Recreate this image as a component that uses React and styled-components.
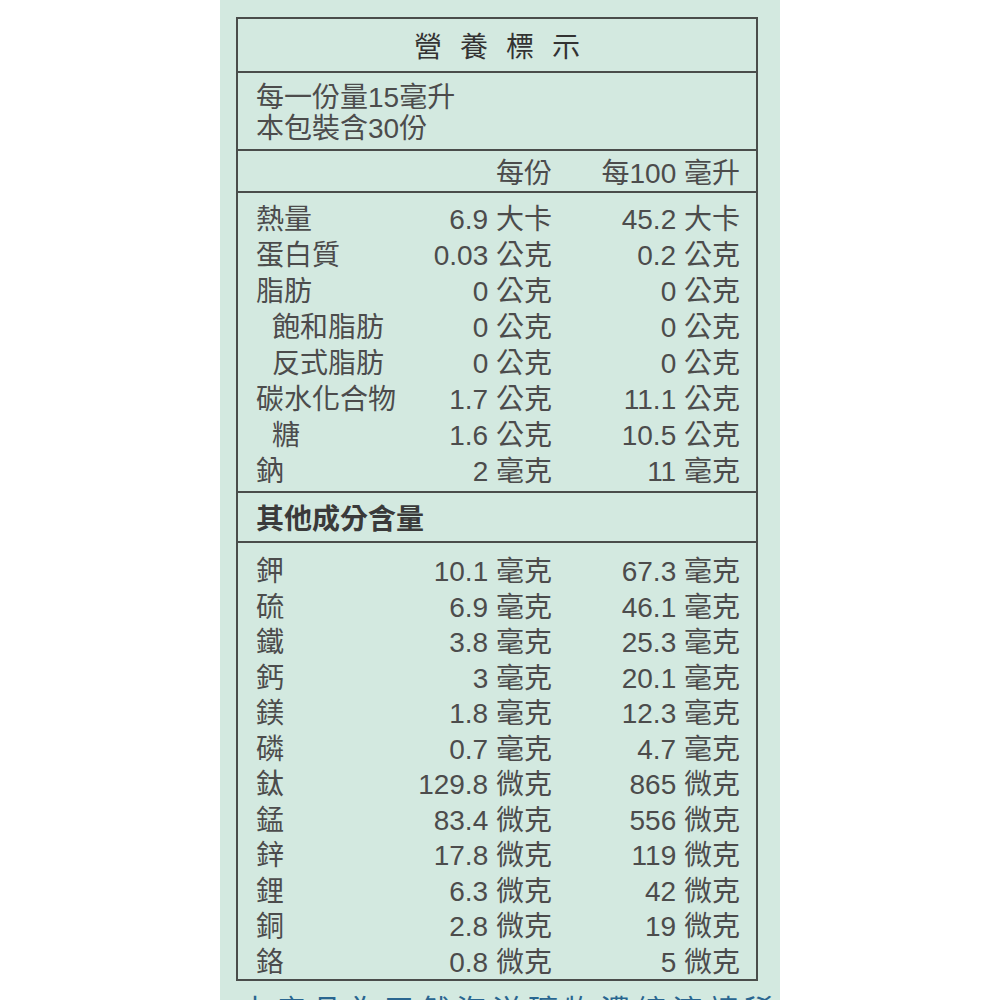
import React from "react";
import styled, { createGlobalStyle } from "styled-components";

const GlobalStyle = createGlobalStyle`
	html, body {
		margin: 0;
		padding: 0;
		background: #ffffff;
		height: 1000px;
		overflow: hidden;
	}
	body {
		font-family: "Liberation Sans", "Noto Sans CJK TC", sans-serif;
	}
`;

const nutrients = [
	{ name: "熱量", serving: "6.9", per100: "45.2", unit: "大卡" },
	{ name: "蛋白質", serving: "0.03", per100: "0.2", unit: "公克" },
	{ name: "脂肪", serving: "0", per100: "0", unit: "公克" },
	{ name: "飽和脂肪", serving: "0", per100: "0", unit: "公克", sub: true },
	{ name: "反式脂肪", serving: "0", per100: "0", unit: "公克", sub: true },
	{ name: "碳水化合物", serving: "1.7", per100: "11.1", unit: "公克" },
	{ name: "糖", serving: "1.6", per100: "10.5", unit: "公克", sub: true },
	{ name: "鈉", serving: "2", per100: "11", unit: "毫克" },
];

const minerals = [
	{ name: "鉀", serving: "10.1", per100: "67.3", unit: "毫克" },
	{ name: "硫", serving: "6.9", per100: "46.1", unit: "毫克" },
	{ name: "鐵", serving: "3.8", per100: "25.3", unit: "毫克" },
	{ name: "鈣", serving: "3", per100: "20.1", unit: "毫克" },
	{ name: "鎂", serving: "1.8", per100: "12.3", unit: "毫克" },
	{ name: "磷", serving: "0.7", per100: "4.7", unit: "毫克" },
	{ name: "鈦", serving: "129.8", per100: "865", unit: "微克" },
	{ name: "錳", serving: "83.4", per100: "556", unit: "微克" },
	{ name: "鋅", serving: "17.8", per100: "119", unit: "微克" },
	{ name: "鋰", serving: "6.3", per100: "42", unit: "微克" },
	{ name: "銅", serving: "2.8", per100: "19", unit: "微克" },
	{ name: "鉻", serving: "0.8", per100: "5", unit: "微克" },
];

const App = () => {
	return (
		<>
			<GlobalStyle />
			<Panel>
				<Label>
					<Title>營養標示</Title>
					<Serving>
						<div>每一份量15毫升</div>
						<div>本包裝含30份</div>
					</Serving>
					<HeaderRow>
						<span />
						<Value>每份</Value>
						<Value>每100 毫升</Value>
					</HeaderRow>
					<Section>
						{nutrients.map((n) => (
							<Row key={n.name}>
								<Name $sub={n.sub}>{n.name}</Name>
								<Value>
									{n.serving} {n.unit}
								</Value>
								<Value>
									{n.per100} {n.unit}
								</Value>
							</Row>
						))}
					</Section>
					<Subhead>其他成分含量</Subhead>
					<Section $last>
						{minerals.map((n) => (
							<Row key={n.name} $tight>
								<Name>{n.name}</Name>
								<Value>
									{n.serving} {n.unit}
								</Value>
								<Value>
									{n.per100} {n.unit}
								</Value>
							</Row>
						))}
					</Section>
				</Label>
				<Footnote>本產品為天然海洋礦物濃縮液請稀釋</Footnote>
			</Panel>
		</>
	);
};

const Panel = styled.div`
	width: 560px;
	height: 1000px;
	margin: 0 auto;
	box-sizing: border-box;
	padding: 17px 22px 0 16px;
	background: #d3e9e0;
	overflow: hidden;
`;

const Label = styled.div`
	border: 2px solid #4a4d4b;
	color: #4c4c4c;
	font-size: 28px;
`;

const Title = styled.div`
	height: 52px;
	display: flex;
	align-items: center;
	justify-content: center;
	padding-left: 18px;
	letter-spacing: 18px;
	color: #333;
	border-bottom: 2px solid #4a4d4b;
`;

const Serving = styled.div`
	height: 78px;
	box-sizing: border-box;
	padding: 9px 0 0 18px;
	line-height: 31px;
	border-bottom: 2px solid #4a4d4b;
`;

const Grid = styled.div`
	display: grid;
	grid-template-columns: minmax(0, 1fr) 188px 188px;
	padding: 0 16px 0 18px;
	align-items: center;
`;

const HeaderRow = styled(Grid)`
	height: 40px;
	border-bottom: 2px solid #4a4d4b;
`;

const Section = styled.div`
	padding: ${(p) => (p.$last ? "6px 0 4px" : "4px 0 6px")};
	border-bottom: ${(p) => (p.$last ? "none" : "2px solid #4a4d4b")};
`;

const Row = styled(Grid)`
	height: ${(p) => (p.$tight ? "35.5px" : "36px")};
`;

const Name = styled.span`
	padding-left: ${(p) => (p.$sub ? "16px" : "0")};
	white-space: nowrap;
	overflow: visible;
`;

const Value = styled.span`
	text-align: right;
	white-space: nowrap;
`;

const Subhead = styled.div`
	height: 48px;
	display: flex;
	align-items: center;
	padding-left: 18px;
	font-weight: 700;
	color: #3a3a3a;
	border-bottom: 2px solid #4a4d4b;
`;

const Footnote = styled.div`
	margin-top: 10px;
	padding-left: 4px;
	font-size: 30px;
	line-height: 40px;
	color: #2a6690;
	letter-spacing: 6px;
	white-space: nowrap;
`;

export default App;
